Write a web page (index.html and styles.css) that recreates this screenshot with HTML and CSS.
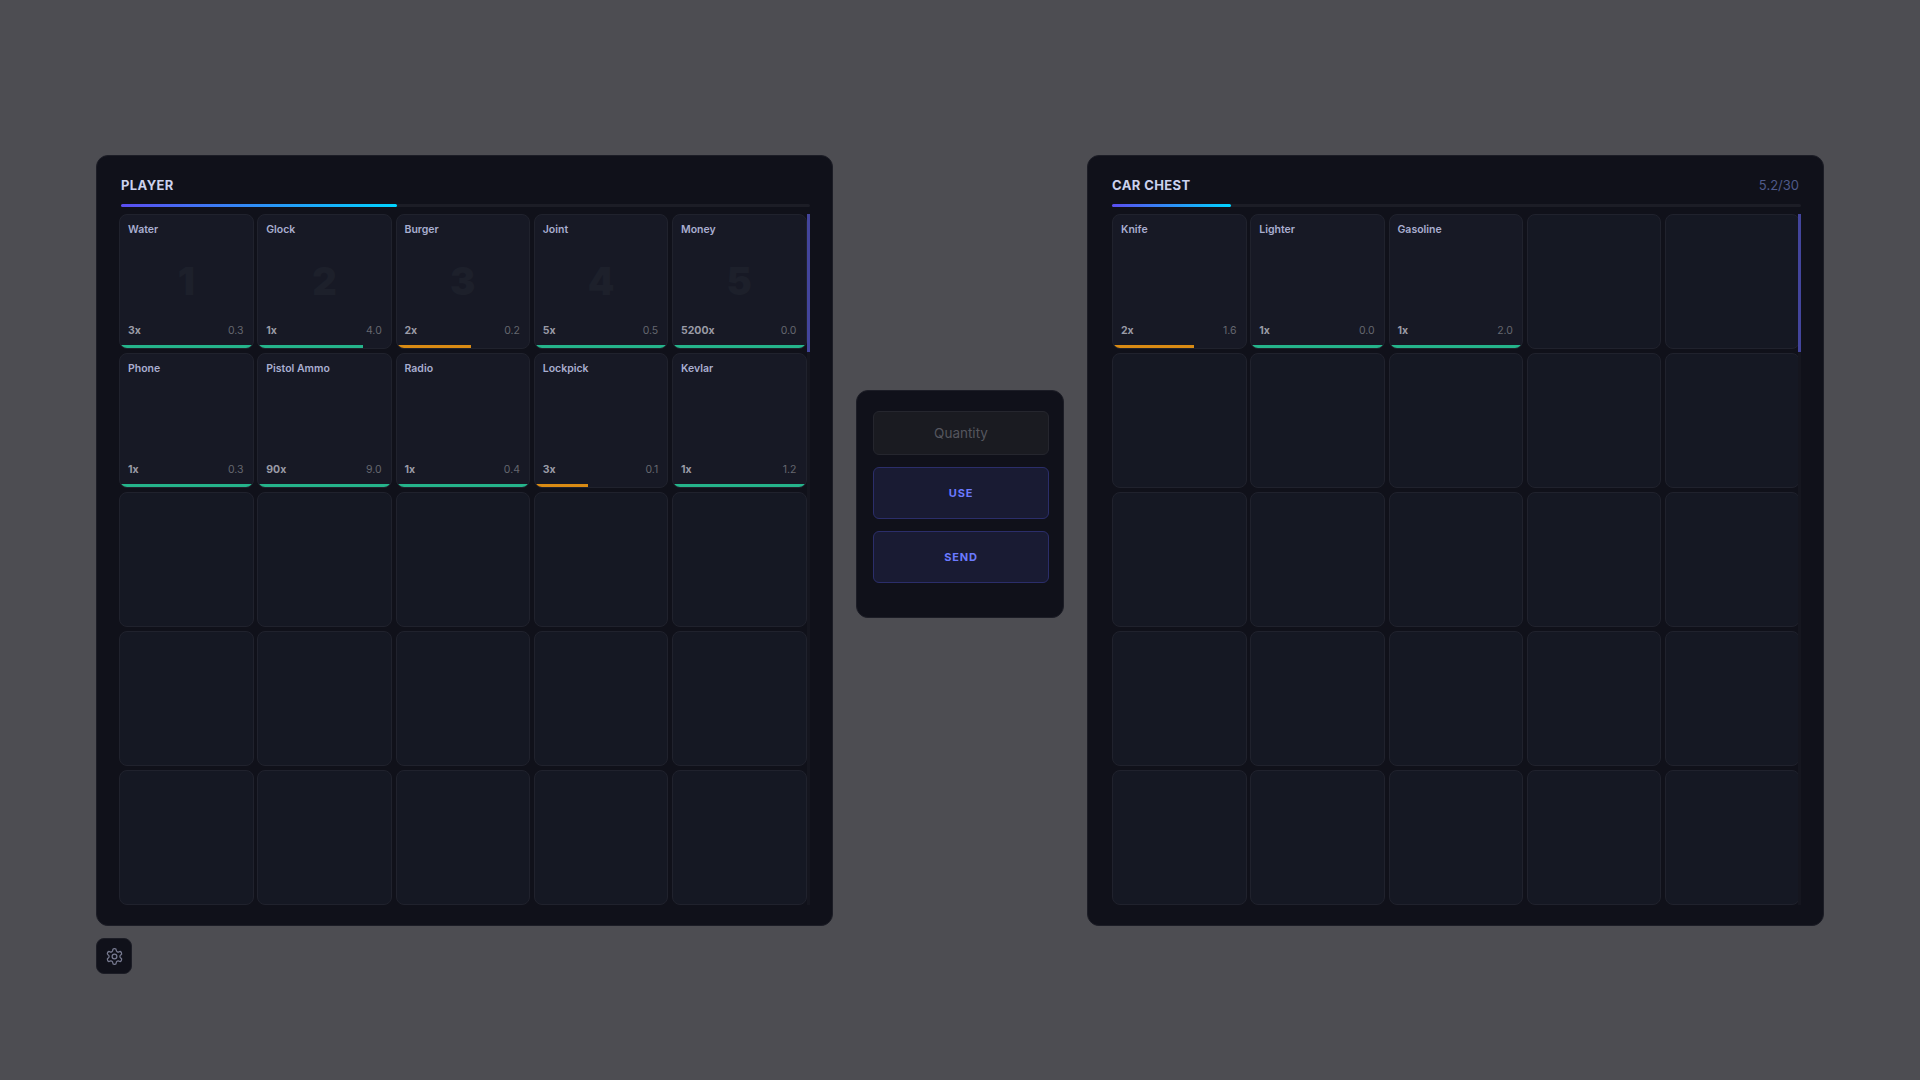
FILE: index.html
```html
<!DOCTYPE html>
<html lang="en">
<head>
    <meta charset="UTF-8">
    <title>Inventory</title>
    <link rel="stylesheet" href="styles.css">
</head>
<body>
    <div class="left-col">
        <div class="panel panel-player">
            <div class="panel-head">
                <span class="panel-title">PLAYER</span>
            </div>
            <div class="weight-bar"><div class="weight-fill fill-40"></div></div>
            <div class="grid-wrap">
                <div class="grid">
                    <div class="slot">
                        <div class="slot-name">Water</div>
                        <div class="slot-key">1</div>
                        <div class="slot-info"><span class="slot-qty">3x</span><span class="slot-weight">0.3</span></div>
                        <div class="dura"><div class="dura-fill good w100"></div></div>
                    </div>
                    <div class="slot">
                        <div class="slot-name">Glock</div>
                        <div class="slot-key">2</div>
                        <div class="slot-info"><span class="slot-qty">1x</span><span class="slot-weight">4.0</span></div>
                        <div class="dura"><div class="dura-fill good w80"></div></div>
                    </div>
                    <div class="slot">
                        <div class="slot-name">Burger</div>
                        <div class="slot-key">3</div>
                        <div class="slot-info"><span class="slot-qty">2x</span><span class="slot-weight">0.2</span></div>
                        <div class="dura"><div class="dura-fill warn w55"></div></div>
                    </div>
                    <div class="slot">
                        <div class="slot-name">Joint</div>
                        <div class="slot-key">4</div>
                        <div class="slot-info"><span class="slot-qty">5x</span><span class="slot-weight">0.5</span></div>
                        <div class="dura"><div class="dura-fill good w100"></div></div>
                    </div>
                    <div class="slot">
                        <div class="slot-name">Money</div>
                        <div class="slot-key">5</div>
                        <div class="slot-info"><span class="slot-qty">5200x</span><span class="slot-weight">0.0</span></div>
                        <div class="dura"><div class="dura-fill good w100"></div></div>
                    </div>
                    <div class="slot">
                        <div class="slot-name">Phone</div>
                        <div class="slot-info"><span class="slot-qty">1x</span><span class="slot-weight">0.3</span></div>
                        <div class="dura"><div class="dura-fill good w100"></div></div>
                    </div>
                    <div class="slot">
                        <div class="slot-name">Pistol Ammo</div>
                        <div class="slot-info"><span class="slot-qty">90x</span><span class="slot-weight">9.0</span></div>
                        <div class="dura"><div class="dura-fill good w100"></div></div>
                    </div>
                    <div class="slot">
                        <div class="slot-name">Radio</div>
                        <div class="slot-info"><span class="slot-qty">1x</span><span class="slot-weight">0.4</span></div>
                        <div class="dura"><div class="dura-fill good w100"></div></div>
                    </div>
                    <div class="slot">
                        <div class="slot-name">Lockpick</div>
                        <div class="slot-info"><span class="slot-qty">3x</span><span class="slot-weight">0.1</span></div>
                        <div class="dura"><div class="dura-fill warn w40"></div></div>
                    </div>
                    <div class="slot">
                        <div class="slot-name">Kevlar</div>
                        <div class="slot-info"><span class="slot-qty">1x</span><span class="slot-weight">1.2</span></div>
                        <div class="dura"><div class="dura-fill good w100"></div></div>
                    </div>
                    <div class="slot empty"></div><div class="slot empty"></div><div class="slot empty"></div><div class="slot empty"></div><div class="slot empty"></div>
                    <div class="slot empty"></div><div class="slot empty"></div><div class="slot empty"></div><div class="slot empty"></div><div class="slot empty"></div>
                    <div class="slot empty"></div><div class="slot empty"></div><div class="slot empty"></div><div class="slot empty"></div><div class="slot empty"></div>
                </div>
                <div class="scroll-track"><div class="scroll-thumb"></div></div>
            </div>
        </div>
        <button class="settings-btn">
            <svg width="19" height="19" viewBox="0 0 24 24" fill="none" stroke="currentColor" stroke-width="1.6" stroke-linecap="round" stroke-linejoin="round">
                <path d="M12.22 2h-.44a2 2 0 0 0-2 2v.18a2 2 0 0 1-1 1.73l-.43.25a2 2 0 0 1-2 0l-.15-.08a2 2 0 0 0-2.73.73l-.22.38a2 2 0 0 0 .73 2.73l.15.1a2 2 0 0 1 1 1.72v.51a2 2 0 0 1-1 1.74l-.15.09a2 2 0 0 0-.73 2.73l.22.38a2 2 0 0 0 2.73.73l.15-.08a2 2 0 0 1 2 0l.43.25a2 2 0 0 1 1 1.73V20a2 2 0 0 0 2 2h.44a2 2 0 0 0 2-2v-.18a2 2 0 0 1 1-1.73l.43-.25a2 2 0 0 1 2 0l.15.08a2 2 0 0 0 2.73-.73l.22-.39a2 2 0 0 0-.73-2.73l-.15-.08a2 2 0 0 1-1-1.74v-.5a2 2 0 0 1 1-1.74l.15-.09a2 2 0 0 0 .73-2.73l-.22-.38a2 2 0 0 0-2.73-.73l-.15.08a2 2 0 0 1-2 0l-.43-.25a2 2 0 0 1-1-1.73V4a2 2 0 0 0-2-2z"/>
                <circle cx="12" cy="12" r="3"/>
            </svg>
        </button>
    </div>

    <div class="panel action-panel">
        <div class="qty-input">Quantity</div>
        <button class="action-btn">USE</button>
        <button class="action-btn">SEND</button>
    </div>

    <div class="panel panel-chest">
        <div class="panel-head">
            <span class="panel-title">CAR CHEST</span>
            <span class="panel-weight">5.2/30</span>
        </div>
        <div class="weight-bar"><div class="weight-fill fill-17"></div></div>
        <div class="grid-wrap">
            <div class="grid">
                <div class="slot">
                    <div class="slot-name">Knife</div>
                    <div class="slot-info"><span class="slot-qty">2x</span><span class="slot-weight">1.6</span></div>
                    <div class="dura"><div class="dura-fill warn w60"></div></div>
                </div>
                <div class="slot">
                    <div class="slot-name">Lighter</div>
                    <div class="slot-info"><span class="slot-qty">1x</span><span class="slot-weight">0.0</span></div>
                    <div class="dura"><div class="dura-fill good w100"></div></div>
                </div>
                <div class="slot">
                    <div class="slot-name">Gasoline</div>
                    <div class="slot-info"><span class="slot-qty">1x</span><span class="slot-weight">2.0</span></div>
                    <div class="dura"><div class="dura-fill good w100"></div></div>
                </div>
                <div class="slot empty"></div><div class="slot empty"></div>
                <div class="slot empty"></div><div class="slot empty"></div><div class="slot empty"></div><div class="slot empty"></div><div class="slot empty"></div>
                <div class="slot empty"></div><div class="slot empty"></div><div class="slot empty"></div><div class="slot empty"></div><div class="slot empty"></div>
                <div class="slot empty"></div><div class="slot empty"></div><div class="slot empty"></div><div class="slot empty"></div><div class="slot empty"></div>
                <div class="slot empty"></div><div class="slot empty"></div><div class="slot empty"></div><div class="slot empty"></div><div class="slot empty"></div>
            </div>
            <div class="scroll-track"><div class="scroll-thumb"></div></div>
        </div>
    </div>
</body>
</html>
```

FILE: styles.css
```css
html, body {
    margin: 0;
    height: 100%;
}

body {
    box-sizing: border-box;
    width: 1920px;
    height: 1080px;
    padding: 155px 96px 0;
    display: flex;
    justify-content: space-between;
    align-items: flex-start;
    background-color: #4d4d52;
    font-family: "Inter", "Noto Sans", sans-serif;
    overflow: hidden;
}

.left-col {
    display: flex;
    flex-direction: column;
    gap: 12px;
}

.panel {
    box-sizing: border-box;
    background-color: #10111a;
    border: 1px solid #1c1d26;
    border-radius: 12px;
}

.panel-player,
.panel-chest {
    width: 737px;
    height: 771px;
    padding: 0 22px;
}

.panel-head {
    display: flex;
    justify-content: space-between;
    align-items: center;
    height: 48px;
    margin-left: 2px;
    box-sizing: border-box;
    padding-top: 10px;
}

.panel-title {
    color: #ccd2ee;
    font-size: 13px;
    font-weight: 700;
    letter-spacing: 0.4px;
}

.panel-weight {
    color: #4f5a8a;
    font-size: 13px;
    margin-right: 2px;
    margin-top: -1px;
}

.weight-bar {
    height: 3px;
    width: 689px;
    margin-left: 2px;
    background-color: #1c1d26;
    border-radius: 2px;
}

.weight-fill {
    height: 100%;
    border-radius: 2px;
    background: linear-gradient(to right, #5b4df0, #00d4ff);
}

.fill-40 { width: 40%; }
.fill-17 { width: 17.3%; }

.grid-wrap {
    position: relative;
    width: 690.5px;
    margin-top: 7px;
}

.grid {
    width: 687.5px;
    display: grid;
    grid-template-columns: repeat(5, 134.5px);
    grid-auto-rows: 134.5px;
    gap: 4.5px 3.75px;
}

.panel-chest .grid {
    margin-left: 2px;
}

.scroll-track {
    position: absolute;
    top: 0;
    right: 0;
    bottom: 0;
    width: 3px;
    background-color: #15161f;
}

.panel-chest .scroll-track {
    right: -0.5px;
}

.scroll-thumb {
    width: 100%;
    height: 20%;
    background-color: #43459c;
}

.slot {
    position: relative;
    box-sizing: border-box;
    display: flex;
    flex-direction: column;
    background-color: #171925;
    border: 1px solid #20222d;
    border-radius: 8px;
    overflow: hidden;
    padding: 8px 9px 10px 8px;
}

.slot.empty {
    background-color: #151823;
}

.slot-name {
    color: #a9aed0;
    font-size: 10.5px;
    font-weight: 600;
    line-height: 14px;
}

.slot-key {
    position: absolute;
    top: 0;
    left: 0;
    right: 0;
    bottom: 0;
    display: flex;
    justify-content: center;
    align-items: center;
    color: #1d202b;
    font-size: 38px;
    font-weight: 900;
}

.slot-info {
    display: flex;
    justify-content: space-between;
    align-items: center;
    margin-top: auto;
    font-size: 10.5px;
    line-height: 14px;
}

.slot-qty {
    color: #9a9ba6;
    font-weight: 700;
}

.slot-weight {
    color: #65676f;
}

.dura {
    position: absolute;
    left: 0;
    right: 0;
    bottom: 0;
    height: 3px;
}

.dura-fill {
    height: 100%;
}

.good { background-color: #25b48b; }
.warn { background-color: #d98b14; }
.w100 { width: 100%; }
.w80 { width: 79%; }
.w60 { width: 61%; }
.w55 { width: 56%; }
.w40 { width: 40%; }

.action-panel {
    width: 208px;
    height: 228px;
    margin-top: 235px;
    padding: 20px 14px 0 16px;
    display: flex;
    flex-direction: column;
}

.qty-input {
    box-sizing: border-box;
    height: 44px;
    display: flex;
    justify-content: center;
    align-items: center;
    background-color: #1a1b21;
    border: 1px solid #25262e;
    border-radius: 6px;
    color: #55565e;
    font-size: 13.5px;
}

.action-btn {
    height: 52px;
    margin-top: 12px;
    background-color: #191b33;
    border: 1px solid #2b2e6a;
    border-radius: 6px;
    color: #6b7aff;
    font-family: inherit;
    font-size: 11px;
    font-weight: 700;
    letter-spacing: 0.8px;
}

.settings-btn {
    display: flex;
    justify-content: center;
    align-items: center;
    width: 36px;
    height: 36px;
    padding: 0;
    background-color: #10111a;
    border: 1px solid #1c1d26;
    border-radius: 8px;
    color: #777a90;
}
```
